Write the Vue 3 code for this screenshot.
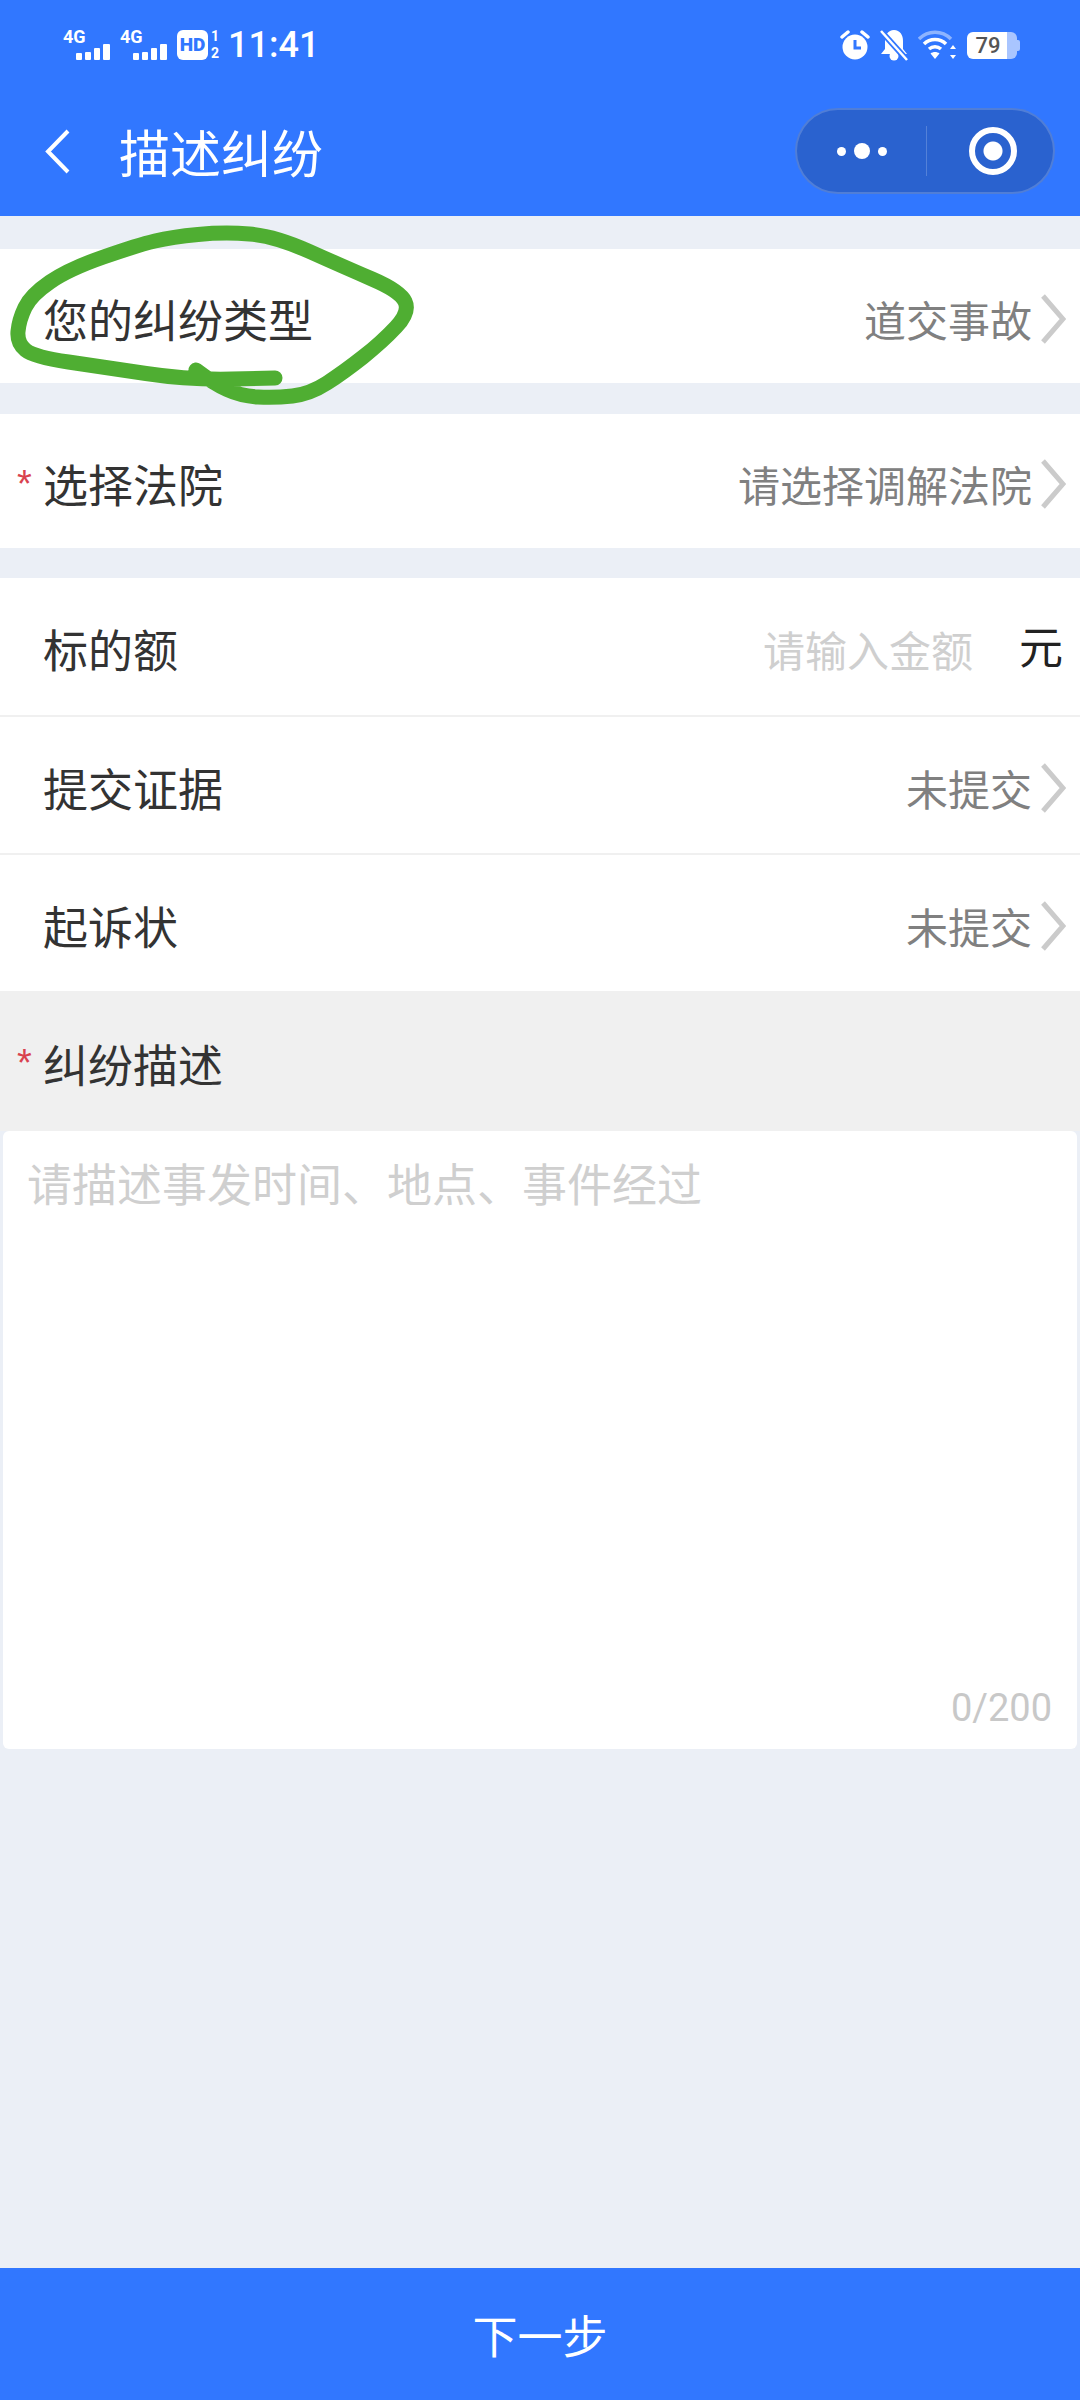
<template>
  <div class="page">
    <!-- 顶部状态栏和导航 -->
    <header class="header">
      <div class="status-bar">
        <div class="status-left">
          <svg v-for="n in 2" :key="n" class="signal" width="47" height="38" viewBox="0 -4 47 38">
            <text x="0" y="13" class="signal-text">4G</text>
            <rect x="13" y="23" width="6" height="7" rx="1" fill="#fff" />
            <rect x="22" y="22" width="6" height="8" rx="1" fill="#fff" />
            <rect x="31" y="18" width="6" height="12" rx="1" fill="#fff" />
            <rect x="40" y="14" width="7" height="16" rx="1" fill="#fff" />
          </svg>
          <svg class="hd" width="43" height="38" viewBox="0 -4 43 38">
            <rect x="0" y="0" width="31" height="30" rx="6" fill="#fff" />
            <text x="15.5" y="21" text-anchor="middle" class="hd-text">HD</text>
            <text x="38" y="11" text-anchor="middle" class="hd-sub">1</text>
            <text x="38" y="28" text-anchor="middle" class="hd-sub">2</text>
          </svg>
          <span class="time">11:41</span>
        </div>
        <div class="status-right">
          <svg width="30" height="30" viewBox="0 0 30 30">
            <circle cx="15" cy="17" r="12.5" fill="#fff" />
            <path d="M15 10v8h6" fill="none" stroke="#3177ff" stroke-width="3" />
            <path d="M2 7l6-5M28 7l-6-5" stroke="#fff" stroke-width="3.5" stroke-linecap="round" />
          </svg>
          <svg width="30" height="32" viewBox="0 0 30 32">
            <path d="M15 1c6 0 9 5 9 11v8l4 5H2l4-5v-8c0-6 3-11 9-11z" fill="#fff" />
            <circle cx="15" cy="27" r="4.5" fill="#fff" />
            <path d="M1 1l27 30" stroke="#3177ff" stroke-width="6" />
            <path d="M2 2l26 29" stroke="#fff" stroke-width="2.5" />
          </svg>
          <svg width="38" height="30" viewBox="0 0 38 30">
            <path d="M1 9c9-9 23-9 32 0" fill="none" stroke="#fff" stroke-opacity=".45" stroke-width="3.5" />
            <path d="M6 14c6-6 16-6 22 0" fill="none" stroke="#fff" stroke-width="3.5" />
            <path d="M11 19c3.500-3 8.500-3 12 0" fill="none" stroke="#fff" stroke-width="3.5" />
            <path d="M17 29l-4.500-5.500c2.500-2 6.500-2 9 0z" fill="#fff" />
            <path d="M35 15l3 4h-6zM35 29l-3-4h6z" fill="#fff" />
          </svg>
          <div class="battery">
            <span class="battery-num">79</span>
          </div>
        </div>
      </div>
      <div class="nav-bar">
        <svg class="back" width="25" height="45" viewBox="0 0 25 45">
          <path d="M23 2L3 22.500 23 43" fill="none" stroke="#fff" stroke-width="4" />
        </svg>
        <span class="nav-title">描述纠纷</span>
        <div class="capsule">
          <div class="capsule-dots">
            <i class="dot"></i>
            <i class="dot dot-big"></i>
            <i class="dot"></i>
          </div>
          <div class="capsule-line"></div>
          <div class="capsule-target"><i></i></div>
        </div>
      </div>
    </header>

    <!-- 表单内容 -->
    <main class="content">
      <section class="group group-first">
        <div class="row">
          <span class="label">您的纠纷类型</span>
          <div class="value-box">
            <span class="value">道交事故</span>
            <svg class="arrow" width="26" height="52" viewBox="0 0 26 52">
              <path d="M3 3l20 23L3 49" fill="none" stroke="#cbcbcb" stroke-width="5" />
            </svg>
          </div>
        </div>
      </section>

      <section class="group">
        <div class="row">
          <span class="label"><i class="star">*</i>选择法院</span>
          <div class="value-box">
            <span class="value">请选择调解法院</span>
            <svg class="arrow" width="26" height="52" viewBox="0 0 26 52">
              <path d="M3 3l20 23L3 49" fill="none" stroke="#cbcbcb" stroke-width="5" />
            </svg>
          </div>
        </div>
      </section>

      <section class="group group-last">
        <div class="row row-line">
          <span class="label">标的额</span>
          <div class="value-box">
            <input v-model="amount" class="amount-input" placeholder="请输入金额" />
            <span class="unit">元</span>
          </div>
        </div>
        <div class="row row-line">
          <span class="label">提交证据</span>
          <div class="value-box">
            <span class="value">未提交</span>
            <svg class="arrow" width="26" height="52" viewBox="0 0 26 52">
              <path d="M3 3l20 23L3 49" fill="none" stroke="#cbcbcb" stroke-width="5" />
            </svg>
          </div>
        </div>
        <div class="row row-end">
          <span class="label">起诉状</span>
          <div class="value-box">
            <span class="value">未提交</span>
            <svg class="arrow" width="26" height="52" viewBox="0 0 26 52">
              <path d="M3 3l20 23L3 49" fill="none" stroke="#cbcbcb" stroke-width="5" />
            </svg>
          </div>
        </div>
      </section>

      <div class="desc-title">
        <span class="label"><i class="star star-desc">*</i>纠纷描述</span>
      </div>
      <div class="desc-wrap">
        <div class="desc-box">
          <textarea v-model="desc" class="desc-input" maxlength="200" placeholder="请描述事发时间、地点、事件经过"></textarea>
          <div class="desc-count">{{ desc.length }}/200</div>
        </div>
      </div>
    </main>

    <footer class="footer">下一步</footer>

    <!-- 截图上的手写圈注 -->
    <svg class="scribble" width="1080" height="420" viewBox="0 0 1080 420">
      <path :d="scribblePath" fill="none" stroke="#4fae32" stroke-width="15" stroke-linecap="round" stroke-linejoin="round" />
    </svg>
  </div>
</template>

<script setup>
import { ref } from "vue";

const amount = ref("");
const desc = ref("");

// 圈注经过的点
const points = [
  [196, 370], [213, 383], [241, 396], [275, 398], [310, 394], [344, 372],
  [382, 342], [410, 312], [400, 291], [344, 267], [275, 236], [224, 232],
  [172, 237], [138, 245], [69, 269], [31, 295], [19, 320], [17, 343],
  [34, 357], [103, 367], [189, 380], [275, 378]
];

// 用中点连成平滑曲线
const buildPath = (list) => {
  let d = `M${list[0][0]} ${list[0][1]}`;
  for (let i = 1; i < list.length - 1; i++) {
    const mx = (list[i][0] + list[i + 1][0]) / 2;
    const my = (list[i][1] + list[i + 1][1]) / 2;
    d += ` Q${list[i][0]} ${list[i][1]} ${mx} ${my}`;
  }
  const last = list[list.length - 1];
  return d + ` L${last[0]} ${last[1]}`;
};

const scribblePath = buildPath(points);
</script>

<style scoped>
.page {
  position: relative;
  display: flex;
  flex-direction: column;
  width: 1080px;
  height: 2400px;
  overflow: hidden;
  background-color: #ebeff6;
  font-family: "Noto Sans CJK SC", "Noto Sans", sans-serif;
  color: #333;
}

/* 顶部 */
.header {
  height: 216px;
  background-color: #3177ff;
  color: #fff;
}

.status-bar {
  display: flex;
  justify-content: space-between;
  align-items: center;
  box-sizing: border-box;
  height: 82px;
  padding: 30px 63px 22px 63px;
}

.status-left,
.status-right {
  display: flex;
  align-items: center;
}

.signal {
  margin-right: 10px;
}

.signal-text {
  font-family: Roboto, sans-serif;
  font-size: 18px;
  font-weight: 700;
  fill: #fff;
}

.hd-text {
  font-family: Roboto, sans-serif;
  font-size: 19px;
  font-weight: 900;
  fill: #3177ff;
}

.hd-sub {
  font-family: Roboto, sans-serif;
  font-size: 14px;
  font-weight: 700;
  fill: #fff;
}

.time {
  margin-left: 8px;
  font-family: Roboto, sans-serif;
  font-size: 36px;
  font-weight: 500;
  line-height: 30px;
}

.status-right {
  gap: 9px;
}

.battery {
  position: relative;
  box-sizing: border-box;
  width: 50px;
  height: 27px;
  margin-left: 2px;
  border-radius: 6px;
  background: linear-gradient(to right, #fff 0 80%, #a9c5ff 80% 100%);
  text-align: center;
}

.battery::after {
  content: "";
  position: absolute;
  right: -3px;
  top: 8px;
  width: 3px;
  height: 11px;
  border-radius: 0 2px 2px 0;
  background-color: #a9c5ff;
}

.battery-num {
  display: block;
  padding-right: 8px;
  font-family: Roboto, sans-serif;
  font-size: 22px;
  font-weight: 500;
  line-height: 27px;
  color: #555;
}

.nav-bar {
  display: flex;
  align-items: center;
  box-sizing: border-box;
  height: 134px;
  padding: 4px 25px 0 45px;
}

.back {
  flex-shrink: 0;
}

.nav-title {
  margin-left: 49px;
  font-size: 51px;
  line-height: 60px;
}

.capsule {
  display: flex;
  align-items: center;
  box-sizing: border-box;
  width: 260px;
  height: 86px;
  margin-left: auto;
  border: 2px solid rgba(255, 255, 255, 0.18);
  border-radius: 43px;
  background-color: #2a62cf;
}

.capsule-dots {
  display: flex;
  justify-content: center;
  align-items: center;
  gap: 8px;
  width: 129px;
}

.dot {
  width: 9px;
  height: 9px;
  border-radius: 50%;
  background-color: #fff;
}

.dot-big {
  width: 16px;
  height: 16px;
}

.capsule-line {
  width: 1px;
  height: 50px;
  background-color: rgba(255, 255, 255, 0.2);
}

.capsule-target {
  display: flex;
  justify-content: center;
  align-items: center;
  flex: 1;
  padding-left: 5px;
}

.capsule-target i {
  box-sizing: border-box;
  width: 48px;
  height: 48px;
  border: 6px solid #fff;
  border-radius: 50%;
  background: radial-gradient(circle, #fff 0 9px, transparent 10px);
}

/* 表单 */
.content {
  flex: 1;
  display: flex;
  flex-direction: column;
  padding-top: 33px;
}

.group {
  margin-bottom: 30px;
  background-color: #fff;
}

.group-first {
  margin-bottom: 31px;
}

.group-last {
  margin-bottom: 0;
}

.row {
  display: flex;
  justify-content: space-between;
  align-items: center;
  box-sizing: border-box;
  height: 134px;
  padding: 6px 14px 0 43px;
}

.row-line {
  height: 138.500px;
  border-bottom: 2px solid #f0f0f0;
}

.row-end {
  height: 136px;
}

.label {
  position: relative;
  font-size: 45px;
  line-height: 60px;
  color: #333;
}

.star {
  position: absolute;
  left: -26px;
  top: 0;
  font-family: "Liberation Sans", sans-serif;
  font-size: 38px;
  font-style: normal;
  color: #d9434e;
}

.star-desc {
  top: -1px;
}

.value-box {
  display: flex;
  align-items: center;
}

.value {
  font-size: 42px;
  line-height: 60px;
  color: #808080;
}

.arrow {
  flex-shrink: 0;
  margin-left: 8px;
}

.amount-input {
  width: 300px;
  padding: 0;
  border: none;
  outline: none;
  background: transparent;
  font-family: inherit;
  font-size: 42px;
  line-height: 60px;
  text-align: right;
  color: #333;
}

.amount-input::placeholder {
  color: #cfcfcf;
}

.unit {
  margin: 0 3px 8px 46px;
  font-size: 44px;
  line-height: 60px;
  color: #222;
}

.desc-title {
  display: flex;
  align-items: center;
  box-sizing: border-box;
  height: 140px;
  padding: 6px 0 0 43px;
  background-color: #f0f0f0;
}

.desc-wrap {
  padding: 0 3px;
}

.desc-box {
  display: flex;
  flex-direction: column;
  box-sizing: border-box;
  height: 618px;
  padding: 19px 25px 19px 24px;
  border-radius: 6px;
  background-color: #fff;
}

.desc-input {
  flex: 1;
  padding: 0;
  border: none;
  outline: none;
  resize: none;
  background: transparent;
  font-family: inherit;
  font-size: 45px;
  line-height: 65px;
  color: #333;
}

.desc-input::placeholder {
  color: #cfcfcf;
}

.desc-count {
  font-family: Roboto, sans-serif;
  font-size: 38px;
  line-height: 44px;
  text-align: right;
  color: #c8c8c8;
}

.footer {
  display: flex;
  justify-content: center;
  align-items: center;
  height: 132px;
  background-color: #3177ff;
  font-size: 45px;
  color: #fff;
}

/* 圈注盖在内容上方 */
.scribble {
  position: absolute;
  left: 0;
  top: 0;
  pointer-events: none;
}
</style>
